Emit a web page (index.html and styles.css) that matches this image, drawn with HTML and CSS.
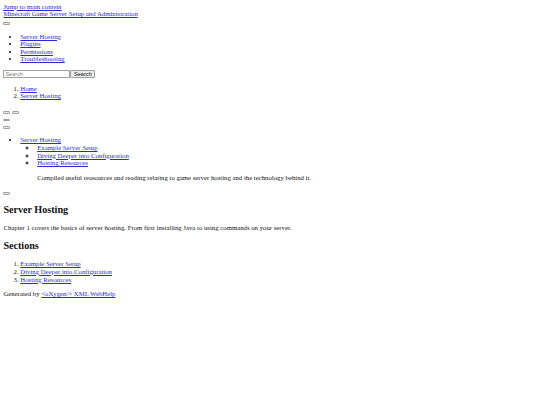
FILE: index.html
```html
<!DOCTYPE html>
<html lang="en">
<head>
<meta charset="utf-8">
<title>Server Hosting</title>
<link rel="stylesheet" href="styles.css">
</head>
<body class="page">
<a href="#main">Jump to main content</a>
<header>
<div><a href="#">Minecraft Game Server Setup and Administration</a></div>
<button class="empty"></button>
<nav>
<ul class="list">
<li><a href="#">Server Hosting</a></li>
<li><a href="#">Plugins</a></li>
<li><a href="#">Permissions</a></li>
<li><a href="#">Troubleshooting</a></li>
</ul>
</nav>
</header>
<form class="search"><input class="search-input" type="text" placeholder="Search"><button class="search-btn" type="button">Search</button></form>
<nav>
<ol class="list">
<li><a href="#">Home</a></li>
<li><a href="#">Server Hosting</a></li>
</ol>
</nav>
<div class="btnrow"><button class="empty"></button> <button class="empty"></button></div>
<div class="btnrow"><button class="empty"></button></div>
<div class="btnrow"><button class="empty"></button></div>
<nav>
<ul class="list">
<li><a href="#">Server Hosting</a>
<ul class="list sublist">
<li><a href="#">Example Server Setup</a></li>
<li><a href="#">Diving Deeper into Configuration</a></li>
<li><a href="#">Hosting Resources</a></li>
</ul>
<div class="desc"><p class="para">Compiled useful reasources and reading relating to game server hosting and the technology behind it.</p></div>
</li>
</ul>
</nav>
<div class="btnrow"><button class="empty"></button></div>
<main id="main">
<h1 class="title">Server Hosting</h1>
<p class="para">Chapter 1 covers the basics of server hosting. From first installing Java to using commands on your server.</p>
<h2 class="sub">Sections</h2>
<ol class="list">
<li><a href="#">Example Server Setup</a></li>
<li><a href="#">Diving Deeper into Configuration</a></li>
<li><a href="#">Hosting Resources</a></li>
</ol>
</main>
<footer>Generated by <a href="#">&lt;oXygen/&gt; XML WebHelp</a></footer>
</body>
</html>
```

FILE: styles.css
```css
.page {
  margin: 2.8px 3.4px 3.4px;
  font-family: "Liberation Serif", "Times New Roman", serif;
  font-size: 6.75px;
  line-height: 7.65px;
  color: #111;
}
.page a {
  color: #2a2ad8;
}
.list {
  margin: 6.75px 0;
  padding-left: 16.9px;
}
.sublist {
  margin: 0;
  list-style-type: circle;
}
.para {
  margin: 6.75px 0;
}
.desc {
  padding-left: 16.9px;
}
.title {
  font-size: 10.125px;
  line-height: 11.6px;
  margin: 8.4px 0;
}
.sub {
  font-size: 10.125px;
  line-height: 11.6px;
  margin: 8.4px 0;
}
.empty {
  width: 6.8px;
  height: 2.8px;
  padding: 0;
  margin: 0;
  border: 0.8px solid #a0a0a0;
  border-radius: 1px;
  background: #ececec;
  vertical-align: baseline;
}
.search {
  display: flex;
  margin: 0;
  height: 8px;
}
.search-input {
  box-sizing: border-box;
  width: 67px;
  height: 8px;
  margin: 0;
  padding: 0 1px;
  border: 0.8px solid #a0a0a0;
  font-family: "Liberation Sans", Arial, sans-serif;
  font-size: 5.6px;
}
.search-input::placeholder {
  color: #808080;
}
.search-btn {
  box-sizing: border-box;
  width: 25px;
  height: 8px;
  margin: 0;
  padding: 0;
  border: 0.8px solid #a0a0a0;
  border-radius: 1px;
  background: #ececec;
  font-family: "Liberation Sans", Arial, sans-serif;
  font-size: 5.6px;
  line-height: 6px;
  color: #111;
}
```
